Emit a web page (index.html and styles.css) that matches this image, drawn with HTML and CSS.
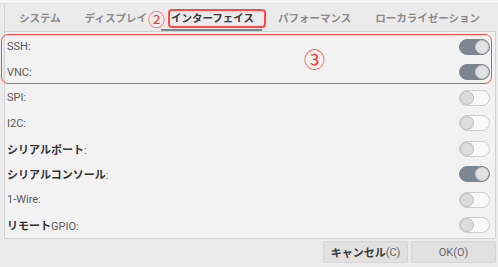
FILE: index.html
```html
<!DOCTYPE html>
<html lang="ja">
<head>
<meta charset="utf-8">
<link rel="stylesheet" href="styles.css">
</head>
<body>
<div class="window">
  <div class="notebook">
    <div class="tabs">
      <div class="tab">システム</div>
      <div class="tab">ディスプレイ</div>
      <div class="tab active">インターフェイス</div>
      <div class="tab">パフォーマンス</div>
      <div class="tab">ローカライゼーション</div>
    </div>
    <div class="panel">
      <div class="row"><span class="lbl">SSH:</span><span class="sw on"></span></div>
      <div class="row"><span class="lbl">VNC:</span><span class="sw on"></span></div>
      <div class="row"><span class="lbl">SPI:</span><span class="sw"></span></div>
      <div class="row"><span class="lbl">I2C:</span><span class="sw"></span></div>
      <div class="row"><span class="lbl"><b>シリアルポート</b>:</span><span class="sw"></span></div>
      <div class="row"><span class="lbl"><b>シリアルコンソール</b>:</span><span class="sw on"></span></div>
      <div class="row"><span class="lbl">1-Wire:</span><span class="sw"></span></div>
      <div class="row"><span class="lbl"><b>リモート</b>GPIO:</span><span class="sw"></span></div>
    </div>
  </div>
  <div class="buttons">
    <div class="btn"><b>キャンセル</b>(C)</div>
    <div class="btn">OK(O)</div>
  </div>
</div>
<div class="mark mark-tab"></div>
<div class="mark mark-rows"></div>
<div class="num num2">②</div>
<div class="num num3">③</div>
</body>
</html>
```

FILE: styles.css
```css
html, body {
  margin: 0;
  padding: 0;
}
body {
  width: 498px;
  height: 267px;
  background: #f5f5f5;
  position: relative;
  overflow: hidden;
  font-family: Roboto, "Noto Sans CJK JP", sans-serif;
}
.window {
  margin-top: 3px;
  height: 264px;
  background: #ebebeb;
  border-top: 1px solid #e2e2e2;
  box-sizing: border-box;
  padding-left: 4px;
}
.notebook {
  width: 492px;
  display: flex;
  flex-direction: column;
}
.tabs {
  display: flex;
  height: 27px;
  align-items: center;
  padding-left: 2px;
  border-left: 1px solid #d6d6d6;
  box-sizing: border-box;
}
.tab {
  font-family: "Noto Sans CJK JP", sans-serif;
  font-size: 10.5px;
  font-weight: 700;
  color: #8a8a8a;
  padding: 0 12px;
  line-height: 27px;
  height: 27px;
  position: relative;
  box-sizing: border-box;
}
.tab.active {
  color: #3a3a3a;
}
.tab.active::after {
  content: "";
  position: absolute;
  left: 2px;
  right: 4px;
  bottom: 0;
  height: 2px;
  background: #7d8792;
}
.panel {
  background: #f2f2f2;
  border: 1px solid #d2d2d2;
  padding: 2px 0 0 2px;
  height: 208px;
  box-sizing: border-box;
  display: flex;
  flex-direction: column;
}
.row {
  height: 25.6px;
  display: flex;
  align-items: center;
  justify-content: space-between;
  padding-right: 5px;
}
.lbl {
  font-size: 11px;
  color: #5a5a5a;
}
.lbl b {
  font-family: "Noto Sans CJK JP", sans-serif;
  font-weight: 700;
  color: #333;
}
.sw {
  width: 31px;
  height: 16px;
  border-radius: 8px;
  box-sizing: border-box;
  background: #f9f9f9;
  border: 1px solid #cdcdcd;
  position: relative;
}
.sw::after {
  content: "";
  position: absolute;
  top: 0;
  left: 0;
  width: 14px;
  height: 14px;
  border-radius: 50%;
  box-sizing: border-box;
  background: #dcdcdc;
  border: 1px solid #bdbdbd;
}
.sw.on {
  background: #7d8792;
  border-color: #7d8792;
}
.sw.on::after {
  left: auto;
  right: 0;
  background: #e2e2e2;
  border-color: #c8c8c8;
}
.buttons {
  display: flex;
  justify-content: flex-end;
  gap: 3px;
  width: 492px;
  padding-top: 2px;
}
.btn {
  width: 85px;
  height: 22px;
  background: #e1e1e1;
  border: 1px solid #d8d8d8;
  border-radius: 2px;
  box-sizing: border-box;
  display: flex;
  align-items: center;
  justify-content: center;
  font-size: 11px;
  color: #666;
}
.btn b {
  font-family: "Noto Sans CJK JP", sans-serif;
  font-weight: 700;
  color: #3a3a3a;
}
.mark {
  position: absolute;
  border: 1.5px solid #ff4a4a;
  box-sizing: border-box;
}
.mark-tab {
  left: 168px;
  top: 9px;
  width: 98px;
  height: 19px;
  border-radius: 4px;
  border-width: 2px;
}
.mark-rows {
  left: 1px;
  top: 34px;
  width: 491px;
  height: 50px;
  border-radius: 7px;
}
.num {
  position: absolute;
  color: #ff3a3a;
  font-family: "Noto Sans CJK JP", sans-serif;
  line-height: 1;
}
.num2 {
  left: 148px;
  top: 10px;
  font-size: 17px;
}
.num3 {
  left: 304px;
  top: 48px;
  font-size: 21px;
}
```
